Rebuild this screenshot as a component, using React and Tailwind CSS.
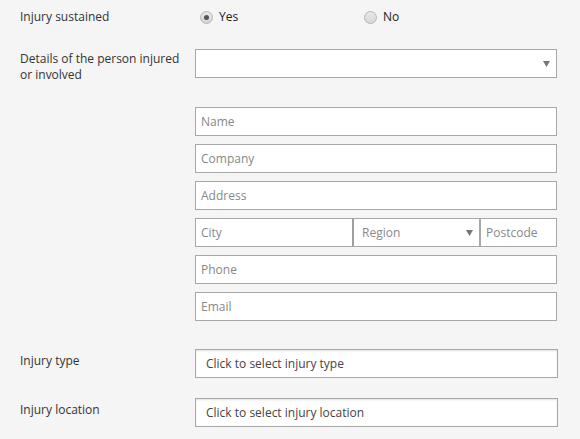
import React from "react";

const FONT = { fontFamily: "'Open Sans', Lato, sans-serif" };

function Radio({ checked, label }) {
    return (
        <label className="flex items-center w-[164px]">
            <span className="w-[13px] h-[13px] rounded-full border border-[#b5b5b5] bg-gradient-to-b from-[#e8e8e8] to-[#d6d6d6] flex items-center justify-center">
                {checked && <span className="w-[5px] h-[5px] rounded-full bg-[#555]" />}
            </span>
            <span className="ml-[6px] text-[12px] text-[#222]">{label}</span>
        </label>
    );
}

function Field({ placeholder, className = "" }) {
    return (
        <div className={`h-[29px] border border-[#a8a8a8] bg-white flex items-center px-[5px] text-[12px] text-[#888] ${className}`}>
            {placeholder}
        </div>
    );
}

function Arrow() {
    return (
        <svg width="7" height="6" viewBox="0 0 7 6" className="shrink-0">
            <path d="M0 0h7L3.5 6z" fill="#777" />
        </svg>
    );
}

export default function App() {
    return (
        <div className="min-h-screen bg-[#f5f5f5] pl-[20px] pt-[8px] text-[12px] text-[#333]" style={FONT}>
            {/* Injury sustained */}
            <div className="flex items-center h-[18px]">
                <div className="w-[180px]">Injury sustained</div>
                <Radio checked label="Yes" />
                <Radio label="No" />
            </div>

            {/* Person details */}
            <div className="flex mt-[23px]">
                <div className="w-[175px] pt-[2px] leading-[16px]">
                    <div>Details of the person injured</div>
                    <div>or involved</div>
                </div>
                <div className="w-[362px] h-[29px] border border-[#a8a8a8] bg-white flex items-center justify-end pr-[6px]">
                    <Arrow />
                </div>
            </div>

            <div className="ml-[175px] w-[362px] mt-[24px] flex flex-col gap-[8px]">
                <Field placeholder="Name" />
                <Field placeholder="Company" />
                <Field placeholder="Address" />
                <div className="flex">
                    <Field placeholder="City" className="w-[158px]" />
                    <div className="w-[128px] h-[29px] border border-l-2 border-[#a8a8a8] border-l-[#a0a0a0] bg-white flex items-center justify-between px-[8px] pr-[6px] text-[12px] text-[#888] -ml-px">
                        <span>Region</span>
                        <Arrow />
                    </div>
                    <Field placeholder="Postcode" className="flex-1 border-l-2 -ml-px" />
                </div>
                <Field placeholder="Phone" />
                <Field placeholder="Email" />
            </div>

            {/* Injury type */}
            <div className="flex mt-[28px]">
                <div className="w-[175px] pt-[3px]">Injury type</div>
                <div className="w-[363px] h-[29px] border border-[#a8a8a8] bg-white shadow-[inset_0_1px_2px_rgba(0,0,0,0.12)] flex items-center px-[10px] text-[12px] text-[#444]">
                    Click to select injury type
                </div>
            </div>

            {/* Injury location */}
            <div className="flex mt-[20px]">
                <div className="w-[175px] pt-[3px]">Injury location</div>
                <div className="w-[363px] h-[29px] border border-[#a8a8a8] bg-white shadow-[inset_0_1px_2px_rgba(0,0,0,0.12)] flex items-center px-[10px] text-[12px] text-[#444]">
                    Click to select injury location
                </div>
            </div>
        </div>
    );
}
